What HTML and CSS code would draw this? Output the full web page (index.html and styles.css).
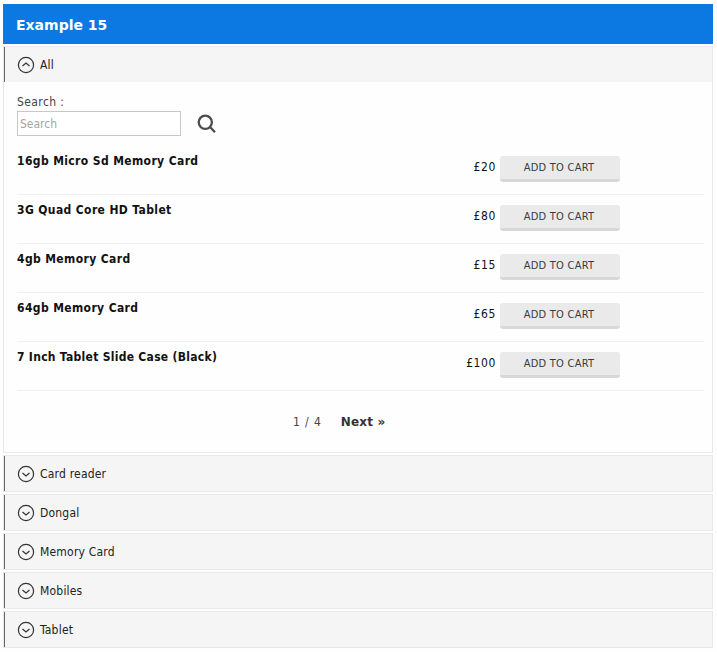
FILE: index.html
```
<!DOCTYPE html>
<html lang="en">
<head>
<meta charset="utf-8">
<title>Example 15</title>
<link rel="stylesheet" href="styles.css">
</head>
<body>
<svg class="defs" width="0" height="0">
  <symbol id="down" viewBox="0 0 18 18"><circle cx="9" cy="9" r="7.6"/><path d="M5.500 8 9 11 12.500 8"/></symbol>
  <symbol id="up" viewBox="0 0 18 18"><circle cx="9" cy="9" r="7.6"/><path d="M5.500 10 9 7 12.500 10"/></symbol>
</svg>
<h1 class="title"><span>Example 15</span></h1>
<main class="accordion">
  <section class="open">
    <h2 class="tab"><svg class="chevron"><use href="#up"/></svg><span>All</span></h2>
    <div class="panel">
      <label class="label" for="q">Search :</label>
      <div class="search">
        <input id="q" type="text" placeholder="Search">
        <svg class="glass" viewBox="0 0 20 20"><circle cx="8.300" cy="8.300" r="6.600"/><path d="M13 13 18 18.300"/></svg>
      </div>
      <ul class="products">
        <li><b>16gb Micro Sd Memory Card</b><span class="price">£20</span><button>ADD TO CART</button></li>
        <li><b>3G Quad Core HD Tablet</b><span class="price">£80</span><button>ADD TO CART</button></li>
        <li><b>4gb Memory Card</b><span class="price">£15</span><button>ADD TO CART</button></li>
        <li><b>64gb Memory Card</b><span class="price">£65</span><button>ADD TO CART</button></li>
        <li><b class="long">7 Inch Tablet Slide Case (Black)</b><span class="price">£100</span><button>ADD TO CART</button></li>
      </ul>
      <nav class="pager"><span>1 / 4</span><b>Next »</b></nav>
    </div>
  </section>
  <h2 class="tab"><svg class="chevron"><use href="#down"/></svg><span>Card reader</span></h2>
  <h2 class="tab"><svg class="chevron"><use href="#down"/></svg><span>Dongal</span></h2>
  <h2 class="tab"><svg class="chevron"><use href="#down"/></svg><span>Memory Card</span></h2>
  <h2 class="tab"><svg class="chevron"><use href="#down"/></svg><span>Mobiles</span></h2>
  <h2 class="tab"><svg class="chevron"><use href="#down"/></svg><span>Tablet</span></h2>
</main>
</body>
</html>
```
FILE: styles.css
```
* { box-sizing: border-box; }
body {
  margin: 0;
  padding: 4px 4px 0 3px;
  background: #fefefe;
  color: #111;
  font: 12px/16px "DejaVu Sans Condensed", "DejaVu Sans", sans-serif;
}
.defs { display: block; }
.title {
  display: flex;
  align-items: center;
  height: 40px;
  margin: 0 0 2px;
  padding: 1px 13px 0;
  background: #0b79e1;
  color: #fff;
  font: bold 14px/20px "DejaVu Sans", sans-serif;
}
.accordion { display: flex; flex-direction: column; gap: 2px; }
.tab {
  display: flex;
  align-items: center;
  gap: 5px;
  height: 37px;
  margin: 0;
  padding: 0 12px;
  border: 1px solid #e8e8e8;
  background: #f5f5f5;
  box-shadow: inset 1px 0 #666;
  color: #222;
  font-size: 12px;
  font-weight: normal;
  letter-spacing: .2px;
}
.chevron { width: 18px; height: 18px; margin-left: 1px; fill: none; stroke: #333; stroke-width: 1.2; }
.open .tab { height: 36px; border-bottom: 0; }
.panel {
  height: 371px;
  padding: 12px 8px 0 13px;
  border: 1px solid #e8e8e8;
  border-top: 0;
}
.label { display: block; height: 17px; color: #444; letter-spacing: .4px; }
.search { display: flex; align-items: center; gap: 16px; }
.search input {
  width: 164px;
  height: 25px;
  padding: 2px 2px 1px;
  border: 1px solid #c8c8c8;
  background: #fff;
  font: inherit;
}
.search input::placeholder { color: #a5a5a5; }
.glass { width: 20px; height: 20px; margin-top: 1px; fill: none; stroke: #4c4c4c; stroke-width: 2.3; }
.products { margin: 10px 0 0; padding: 0; list-style: none; }
.products li {
  display: grid;
  grid-template-columns: 400px 79px 120px;
  height: 49px;
  padding-top: 7px;
  border-bottom: 1px solid #f1f1f1;
}
.products b { letter-spacing: .38px; }
.products .long { letter-spacing: .29px; }
.price { padding: 6px 0 0; text-align: right; letter-spacing: .6px; }
.products button {
  width: 120px;
  height: 26px;
  margin: 3px 0 0 4px;
  padding: 1px 2px 0 0;
  border: 0;
  border-bottom: 3px solid #d8d8d8;
  border-radius: 3px;
  background: #eaeaea;
  color: #3b3b3b;
  font: 11px/16px "DejaVu Sans Condensed", "DejaVu Sans", sans-serif;
  letter-spacing: .25px;
}
.pager { display: flex; gap: 19px; margin: 23px 0 0 276px; color: #444; }
.pager span { letter-spacing: .9px; }
.pager b { color: #333; font-family: "DejaVu Sans", sans-serif; letter-spacing: .2px; }
```
